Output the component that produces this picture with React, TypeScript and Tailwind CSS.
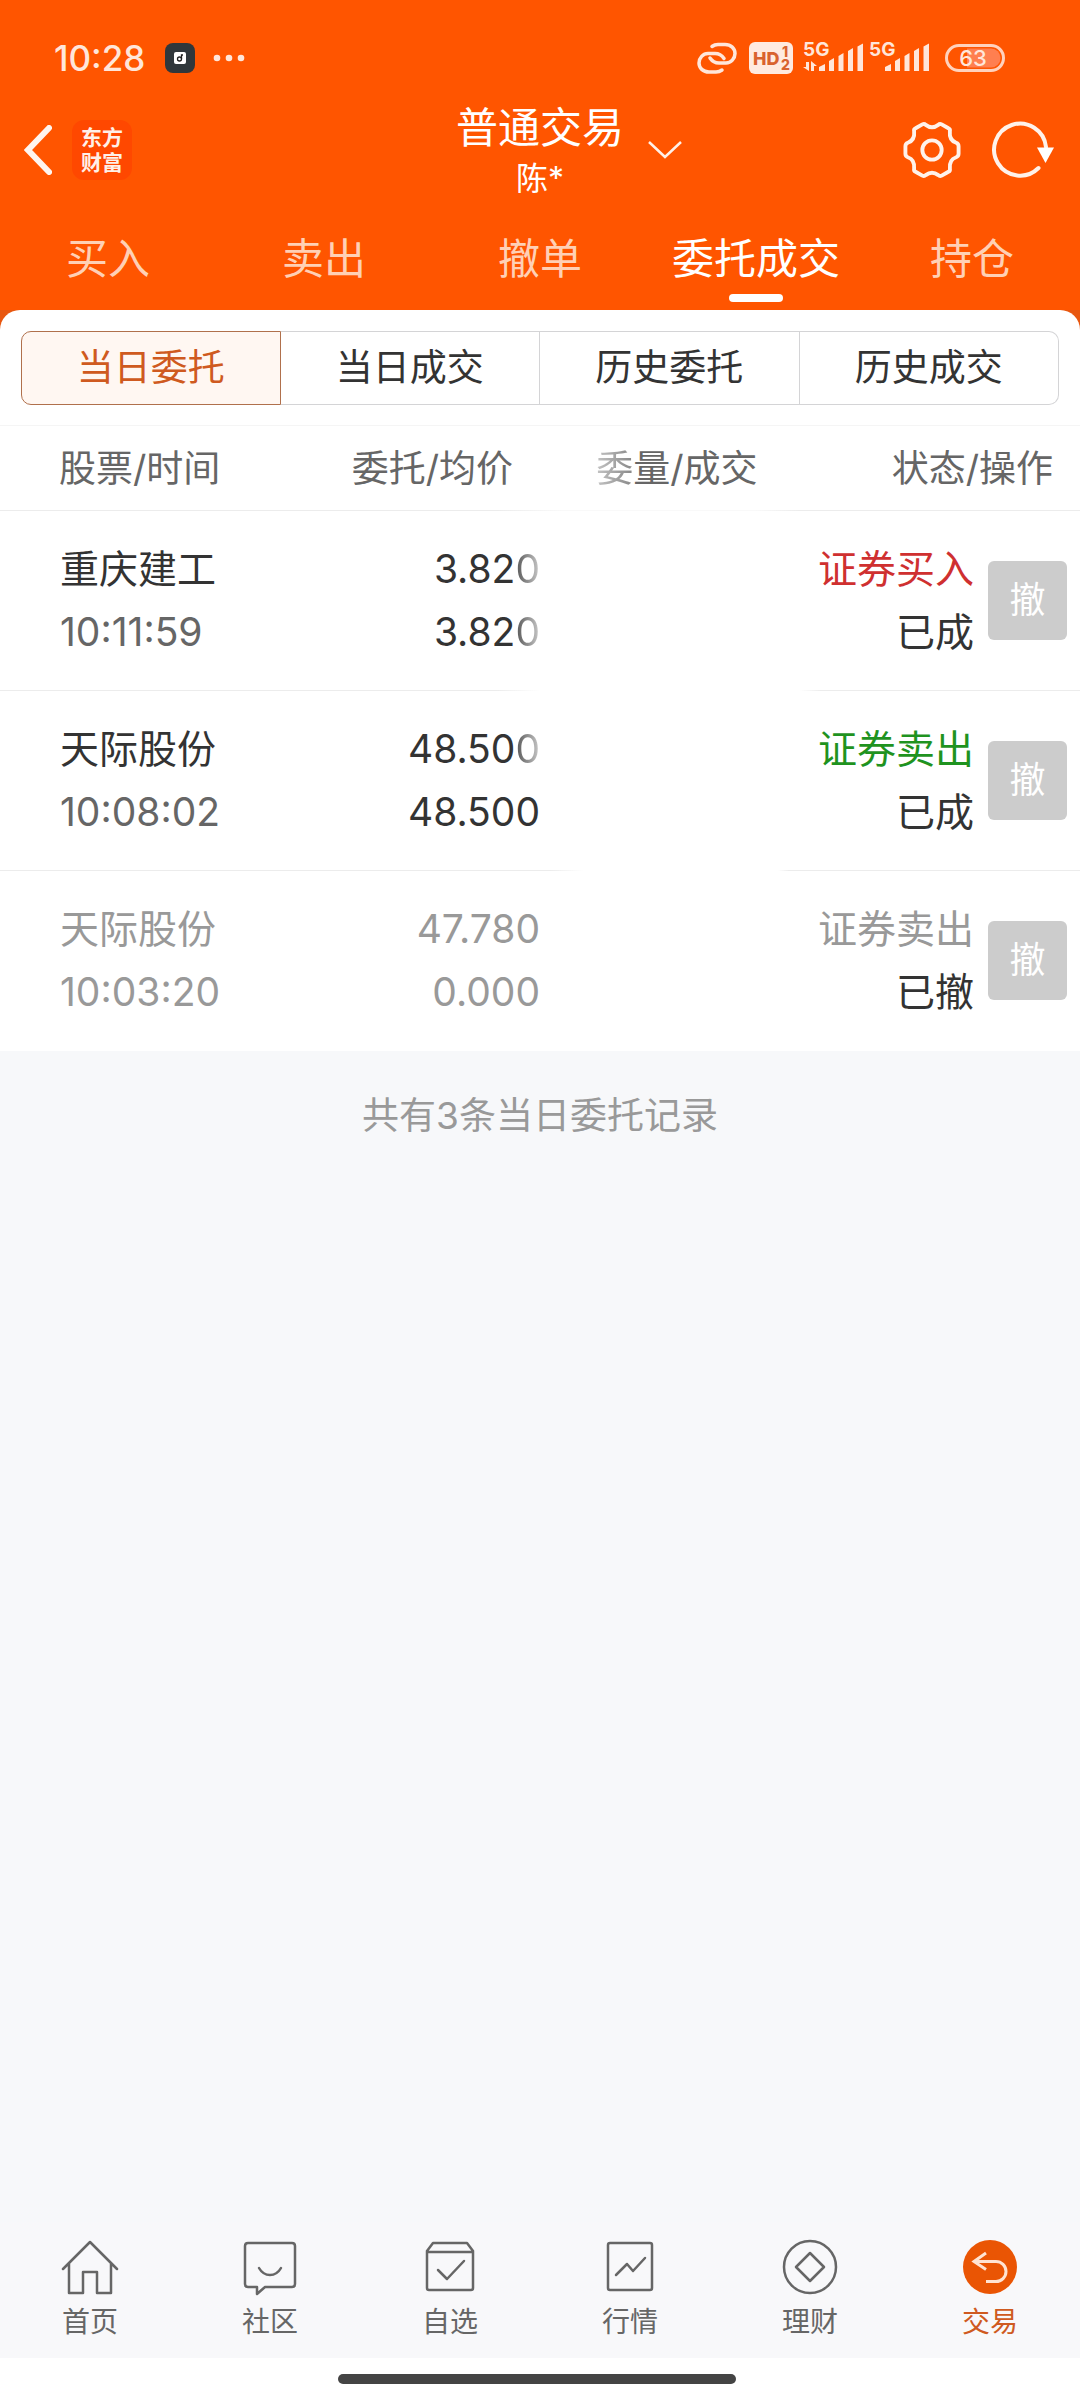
import React from "react";

const tabs = ["买入", "卖出", "撤单", "委托成交", "持仓"];
const segments = ["当日委托", "当日成交", "历史委托", "历史成交"];

type Order = {
  name: string;
  time: string;
  price: React.ReactNode;
  average: React.ReactNode;
  side: string;
  sideColor: string;
  status: string;
  nameColor: string;
  timeColor: string;
  priceColor: string;
  divider: string;
};

function Fade({ children }: { children: React.ReactNode }) {
  return (
    <span className="bg-linear-to-r from-[#555555] to-[#cccccc] bg-clip-text text-transparent">
      {children}
    </span>
  );
}

const orders: Order[] = [
  {
    name: "重庆建工",
    time: "10:11:59",
    price: <>3.82<Fade>0</Fade></>,
    average: <>3.82<Fade>0</Fade></>,
    side: "证券买入",
    sideColor: "text-[#cf3030]",
    status: "已成",
    nameColor: "text-[#333333]",
    timeColor: "text-[#666666]",
    priceColor: "text-[#333333]",
    divider: "bg-[linear-gradient(to_right,#ececec_46%,#ffffff_50%,#ffffff_74%,#ececec_76%)]",
  },
  {
    name: "天际股份",
    time: "10:08:02",
    price: <>48.50<Fade>0</Fade></>,
    average: "48.500",
    side: "证券卖出",
    sideColor: "text-[#1f931f]",
    status: "已成",
    nameColor: "text-[#333333]",
    timeColor: "text-[#666666]",
    priceColor: "text-[#333333]",
    divider: "bg-[linear-gradient(to_right,#ececec_51%,#ffffff_54%,#ffffff_72%,#ececec_73%)]",
  },
  {
    name: "天际股份",
    time: "10:03:20",
    price: "47.780",
    average: "0.000",
    side: "证券卖出",
    sideColor: "text-[#999999]",
    status: "已撤",
    nameColor: "text-[#999999]",
    timeColor: "text-[#999999]",
    priceColor: "text-[#999999]",
    divider: "bg-none",
  },
];

function Signal({ arrows }: { arrows?: boolean }) {
  return (
    <svg width="62" height="44" viewBox="0 -6 62 44" className="text-[#ffe6da]" aria-hidden="true">
      <text x="0" y="14" fontSize="19" fontWeight="700" fontFamily="Inter, sans-serif" fill="currentColor">5G</text>
      {arrows && (
        <g fill="currentColor">
          <path d="M3 20h3v9L0 25h3zM8 29V19l6 5h-3v5z" />
        </g>
      )}
      <g fill="currentColor">
        <path d="M16 29v-4l6-3v7z" />
        <path d="M26 29V19l5-3v13z" />
        <path d="M35.500 29V14l5-3v18z" />
        <path d="M45 29V9l5-3v23z" />
        <path d="M54.500 29V4.500l5.500-3V29z" />
      </g>
    </svg>
  );
}

function StatusBar() {
  return (
    <div className="flex h-20 items-end justify-between pr-[75px] pl-[54px] text-[#ffe6da]">
      <div className="flex h-11 items-center">
        <span className="text-[35px] leading-8 font-medium">10:28</span>
        <svg width="30" height="30" viewBox="0 0 30 30" className="ml-5" aria-hidden="true">
          <rect width="30" height="30" rx="8" fill="#30373b" />
          <rect x="9" y="9" width="12" height="12" rx="2" fill="#fff" />
          <circle cx="14.500" cy="16" r="2" fill="none" stroke="#222" strokeWidth="1.300" />
          <path d="M16.500 16v-4h1.500" fill="none" stroke="#222" strokeWidth="1.300" />
        </svg>
        <svg width="32" height="8" viewBox="0 0 32 8" className="ml-[18px]" fill="currentColor" aria-hidden="true">
          <circle cx="4" cy="4" r="3.300" />
          <circle cx="16" cy="4" r="3.300" />
          <circle cx="28" cy="4" r="3.300" />
        </svg>
      </div>
      <div className="flex h-11 items-center">
        <svg width="40" height="32" viewBox="0 0 40 32" fill="none" stroke="currentColor" strokeWidth="3.500" strokeLinecap="round" aria-hidden="true">
          <path d="M15 4.500C17 3 19 2.500 21 2.500h7c6 0 10 4 10 9s-4 9.500-9 9.500h-7c-4 0-7-2-9-5" />
          <path d="M25 28c-2 1.500-4 2-6 2h-7c-6 0-10-4-10-9s4-9.500 9-9.500h7c4 0 7 2 9 5" />
        </svg>
        <svg width="44" height="32" viewBox="0 0 44 32" className="ml-3" aria-hidden="true">
          <rect width="44" height="32" rx="6" fill="#ffeae0" />
          <g fontFamily="Inter, sans-serif" fontWeight="800" fill="#d9622f">
            <text x="4" y="23" fontSize="18">HD</text>
            <text x="33" y="15" fontSize="14">1</text>
            <text x="32" y="28" fontSize="14">2</text>
          </g>
        </svg>
        <div className="ml-2.5 flex gap-1">
          <Signal arrows />
          <Signal />
        </div>
        <svg width="60" height="28" viewBox="0 0 60 28" className="ml-3.5" aria-hidden="true">
          <rect x="1.500" y="1.500" width="57" height="25" rx="12.500" fill="none" stroke="#ffd2bd" strokeWidth="3" />
          <path d="M22 4.500h24a9.500 9.500 0 0 1 0 19H22z" fill="#ff7f50" />
          <text x="28" y="22" textAnchor="middle" fontSize="22" fontWeight="500" fontFamily="Inter, sans-serif" fill="#ffe6da">63</text>
        </svg>
      </div>
    </div>
  );
}

function GearIcon() {
  return (
    <svg width="58" height="58" viewBox="0 0 60 60" fill="none" stroke="#fff2ea" strokeWidth="4" strokeLinejoin="round" aria-hidden="true">
      <path d="M20 3.500Q22 2.500 23.500 4Q30 9 36.500 4Q38 2.500 40 3.500L47 7.500Q49 8.500 48.500 10.500Q47.500 20 55 22.500Q57.500 23.500 57.500 26V34Q57.500 36.500 55 37.500Q47.500 40 48.500 49.500Q49 51.500 47 52.500L40 56.500Q38 57.500 36.500 56Q30 51 23.500 56Q22 57.500 20 56.500L13 52.500Q11 51.500 11.500 49.500Q12.500 40 5 37.500Q2.500 36.500 2.500 34V26Q2.500 23.500 5 22.500Q12.500 20 11.500 10.500Q11 8.500 13 7.500Z" />
      <circle cx="30" cy="30" r="10" />
    </svg>
  );
}

function RefreshIcon() {
  return (
    <svg width="64" height="60" viewBox="0 0 64 60" aria-hidden="true">
      <path d="M46.500 48A26 26 0 1 1 54 27" fill="none" stroke="#fff2ea" strokeWidth="4" strokeLinecap="round" />
      <path d="M45 27.500h17L53.500 43z" fill="#fff" />
    </svg>
  );
}

const navItems = [
  {
    label: "首页",
    icon: <path d="M3 30L30 3l27 27M9 25v29h14V33h14v21h14V25" />,
  },
  {
    label: "社区",
    icon: (
      <>
        <path d="M8 4h44q3 0 3 3v38q0 3-3 3H25l-8 7v-7H8q-3 0-3-3V7q0-3 3-3z" />
        <path d="M19 29q4 7 11 7t11-7" />
      </>
    ),
  },
  {
    label: "自选",
    icon: (
      <>
        <path d="M7 12l6-8h34l6 8v37q0 2-2 2H9q-2 0-2-2zM7 13h46" />
        <path d="M18 31l9 9 17-18" />
      </>
    ),
  },
  {
    label: "行情",
    icon: (
      <>
        <rect x="8" y="4" width="44" height="47" rx="2" />
        <path d="M16 36l11-11 6 7 12-13" />
      </>
    ),
  },
  {
    label: "理财",
    icon: (
      <>
        <circle cx="30" cy="28" r="26" />
        <path d="M30 14l14 14-14 14-14-14z" />
      </>
    ),
  },
];

export default function App() {
  return (
    <div className="flex min-h-screen flex-col bg-[#f7f8fa] font-[Inter,'Noto_Sans_CJK_SC',sans-serif] text-[#333333]">
      <header className="bg-[#ff5500]">
        <StatusBar />
        <div className="grid h-[140px] grid-cols-[1fr_auto_1fr] items-center pr-6 pl-6">
          <div className="flex items-center gap-5">
            <button aria-label="返回">
              <svg width="28" height="50" viewBox="0 0 28 50" fill="none" stroke="#fff5ef" strokeWidth="6" strokeLinecap="round" aria-hidden="true">
                <path d="M25 3L4 25l21 22" />
              </svg>
            </button>
            <div className="flex h-[60px] w-[60px] flex-col items-center justify-center rounded-xl bg-[#ff4800] text-[21px] leading-[25px] font-bold text-[#fff0e8]">
              <span>东方</span>
              <span>财富</span>
            </div>
          </div>
          <button className="relative flex flex-col items-center pt-1 text-white">
            <span className="text-[42px] leading-[54px]">普通交易</span>
            <span className="text-[32px] leading-[48px]">陈*</span>
            <svg width="34" height="18" viewBox="0 0 34 18" fill="none" stroke="#fff0e8" strokeWidth="2.500" className="absolute top-11 left-full ml-6" aria-hidden="true">
              <path d="M1 1l16 15L33 1" />
            </svg>
          </button>
          <div className="flex items-center justify-end gap-[31px]">
            <button aria-label="设置"><GearIcon /></button>
            <button aria-label="刷新"><RefreshIcon /></button>
          </div>
        </div>
        <nav className="grid h-[90px] grid-cols-5">
          {tabs.map((t) => (
            <button
              key={t}
              className={
                t === "委托成交"
                  ? "relative flex justify-center pt-1.5 text-[42px] leading-[66px] text-white"
                  : "flex justify-center pt-1.5 text-[42px] leading-[66px] text-[#ffd0b5]"
              }
            >
              {t}
              {t === "委托成交" && (
                <span className="absolute bottom-2 h-2 w-[54px] rounded-full bg-white" />
              )}
            </button>
          ))}
        </nav>
      </header>

      <main className="flex-1">
        <div className="bg-[#e8570f]">
          <section className="rounded-t-[20px] bg-white">
            <div className="px-[21px] pt-[21px] pb-5">
              <div className="grid h-[74px] grid-cols-4">
                {segments.map((s, i) => (
                  <button
                    key={s}
                    className={
                      i === 0
                        ? "rounded-l-[10px] border border-[#b0704c] bg-[#fff7f2] text-[37px] text-[#cf5a20]"
                        : i === 3
                          ? "rounded-r-[10px] border-y border-r border-[#d4d4d6] text-[37px]"
                          : "border-y border-r border-[#d4d4d6] text-[37px]"
                    }
                  >
                    {s}
                  </button>
                ))}
              </div>
            </div>
            <table className="w-full table-fixed border-separate border-spacing-0 border-t border-[#f5f5f5]">
              <colgroup>
                <col className="w-[25%]" />
                <col className="w-[25%]" />
                <col className="w-[22%]" />
                <col className="w-[28%]" />
              </colgroup>
              <thead>
                <tr className="h-[85px] bg-[linear-gradient(to_right,#ececec_46%,#f9f9f9_52%,#f9f9f9_70%,#ececec_74%)] bg-size-[100%_1px] bg-bottom bg-no-repeat text-[37px] text-[#666666]">
                  <th className="pl-[59px] text-left font-normal">股票/时间</th>
                  <th className="pr-[27px] text-right font-normal">委托/均价</th>
                  <th className="pr-5 text-right font-normal">
                    <span className="bg-linear-to-r from-[#c4c4c4] to-[#888888] bg-clip-text text-transparent">委</span>量/成交
                  </th>
                  <th className="pr-[27px] text-right font-normal">状态/操作</th>
                </tr>
              </thead>
              <tbody className="text-[39px] leading-[63px]">
                {orders.map((o) => (
                  <tr key={o.time} className={`h-[180px] bg-size-[100%_1px] bg-bottom bg-no-repeat ${o.divider}`}>
                    <td className="pb-0.5 pl-[60px]">
                      <div className={o.nameColor}>{o.name}</div>
                      <div className={o.timeColor}>{o.time}</div>
                    </td>
                    <td className={`pb-0.5 text-right ${o.priceColor}`}>
                      <div>{o.price}</div>
                      <div>{o.average}</div>
                    </td>
                    <td />
                    <td className="pr-[13px] pb-0.5">
                      <div className="flex items-center justify-end gap-[14px]">
                        <div className="text-right">
                          <div className={o.sideColor}>{o.side}</div>
                          <div>{o.status}</div>
                        </div>
                        <button className="h-[79px] w-[79px] rounded-md bg-[#cccccc] text-[36px] text-white">撤</button>
                      </div>
                    </td>
                  </tr>
                ))}
              </tbody>
            </table>
          </section>
        </div>
        <p className="pt-10 text-center text-[37px] leading-[50px] text-[#999999]">共有3条当日委托记录</p>
      </main>

      <nav className="grid h-[136px] grid-cols-6 bg-[#f8f8fa] text-[28px] leading-[42px] text-[#666666]">
        {navItems.map((n) => (
          <a key={n.label} href="#" className="flex flex-col items-center pt-[17px]">
            <svg width="60" height="62" viewBox="0 0 60 62" fill="none" stroke="#666666" strokeWidth="2.500" strokeLinejoin="round" strokeLinecap="round" aria-hidden="true">
              {n.icon}
            </svg>
            {n.label}
          </a>
        ))}
        <a href="#" className="flex flex-col items-center pt-[17px] text-[#cf5a20]">
          <svg width="60" height="62" viewBox="0 0 60 62" fill="none" aria-hidden="true">
            <circle cx="30" cy="28" r="27" fill="#ea5504" />
            <path d="M26 14L14 22.500l12 8M15 22.500h21a10 10 0 0 1 0 20H26" stroke="#ffe3d2" strokeWidth="3" />
          </svg>
          交易
        </a>
      </nav>
      <div className="flex h-[42px] justify-center bg-white pt-4 pr-1.5">
        <div className="h-[10px] w-[398px] rounded-full bg-[#444444]" />
      </div>
    </div>
  );
}
